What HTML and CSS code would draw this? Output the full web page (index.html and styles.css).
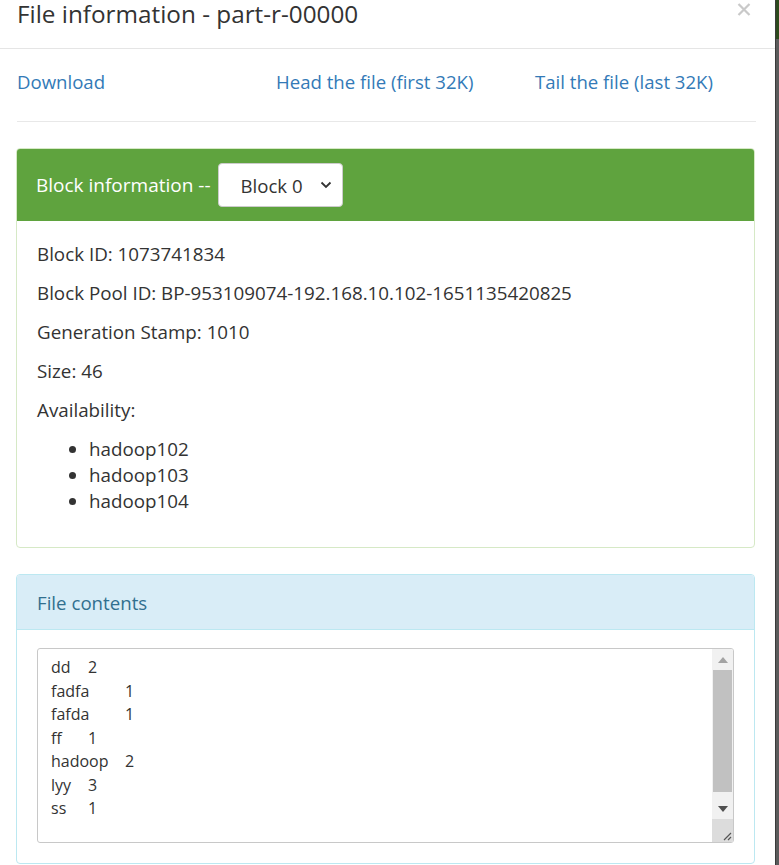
FILE: index.html
```html
<!DOCTYPE html>
<html>
<head>
<meta charset="utf-8">
<link rel="stylesheet" href="styles.css">
</head>
<body>
<div class="screen">
  <div class="modal">
    <div class="modal-header">
      <h4 class="modal-title">File information - part-r-00000</h4>
      <svg class="close" width="14" height="13" viewBox="0 0 14 13"><path d="M1.5 1 L12.5 12 M12.5 1 L1.5 12" stroke="#c9c9c9" stroke-width="2.2"/></svg>
    </div>
    <div class="modal-body">
      <div class="links">
        <a href="#">Download</a>
        <a href="#">Head the file (first 32K)</a>
        <a href="#">Tail the file (last 32K)</a>
      </div>
      <hr class="sep">
      <div class="panel panel-success">
        <div class="panel-heading">
          <span>Block information --</span>
          <div class="select"><span>Block 0</span>
            <svg class="chev" width="12" height="8" viewBox="0 0 12 8"><path d="M1.5 1.5 L6 6 L10.5 1.5" fill="none" stroke="#333" stroke-width="1.8"/></svg>
          </div>
        </div>
        <div class="panel-body">
          <p>Block ID: 1073741834</p>
          <p>Block Pool ID: BP-953109074-192.168.10.102-1651135420825</p>
          <p>Generation Stamp: 1010</p>
          <p>Size: 46</p>
          <p>Availability:</p>
          <ul>
            <li>hadoop102</li>
            <li>hadoop103</li>
            <li>hadoop104</li>
          </ul>
        </div>
      </div>
      <div class="panel panel-info">
        <div class="panel-heading">File contents</div>
        <div class="panel-body">
          <div class="textarea">
            <pre class="content">dd	2
fadfa	1
fafda	1
ff	1
hadoop	2
lyy	3
ss	1</pre>
            <div class="scrollbar">
              <div class="arrow up"><svg width="10" height="6" viewBox="0 0 10 6"><path d="M0 6 L5 0 L10 6 Z" fill="#a3a3a3"/></svg></div>
              <div class="track"><div class="thumb"></div></div>
              <div class="arrow down"><svg width="10" height="6" viewBox="0 0 10 6"><path d="M0 0 L10 0 L5 6 Z" fill="#505050"/></svg></div>
              <div class="corner"><svg width="10" height="10" viewBox="0 0 10 10"><path d="M9 2 L2 9 M9 6 L6 9" stroke="#555" stroke-width="1.2"/></svg></div>
            </div>
          </div>
        </div>
      </div>
    </div>
  </div>
  <div class="backdrop">
    <div class="bd-top"></div>
    <div class="bd-rest"></div>
  </div>
</div>
</body>
</html>
```

FILE: styles.css
```css
html, body {
  margin: 0;
  padding: 0;
  background: #fff;
}
body {
  font-family: "Open Sans", "Noto Sans", sans-serif;
  color: #333;
  overflow: hidden;
}
.screen {
  display: flex;
  width: 779px;
  height: 865px;
  overflow: hidden;
}
.modal {
  width: 775px;
  flex: none;
  background: #fff;
}
.backdrop {
  flex: 1;
  display: flex;
  flex-direction: column;
  border-left: 1px solid #3a3a3a;
}
.bd-top {
  height: 39px;
  background: #2c4a1c;
}
.bd-rest {
  flex: 1;
  background: #5b5b5b;
}
.modal-header {
  display: flex;
  justify-content: space-between;
  align-items: flex-start;
  height: 49px;
  box-sizing: border-box;
  padding: 0 24px 0 17px;
  border-bottom: 1px solid #e5e5e5;
}
.modal-title {
  margin: 0;
  font-size: 24.3px;
  font-weight: normal;
  line-height: 28px;
  color: #333;
}
.close {
  display: block;
  margin-top: 3px;
}
.modal-body {
  padding: 20px 20px 0 16px;
}
.links {
  display: grid;
  grid-template-columns: 259px 259px 1fr;
  padding-left: 1px;
}
.links a {
  color: #337ab7;
  text-decoration: none;
  font-size: 18.6px;
  line-height: 26px;
}
.sep {
  border: 0;
  border-top: 1px solid #e8e8e8;
  margin: 26px 0 26px 1px;
  width: 739px;
}
.panel {
  width: 739px;
  box-sizing: border-box;
  border: 1px solid;
  border-radius: 4px;
  background: #fff;
  overflow: hidden;
}
.panel-success {
  border-color: #d6e9c6;
  margin-bottom: 26px;
}
.panel-info {
  border-color: #bce8f1;
}
.panel-success .panel-heading {
  background: #5fa33e;
  color: #fff;
  display: flex;
  align-items: center;
  gap: 7px;
  height: 73px;
  box-sizing: border-box;
  padding: 1px 20px 0;
  font-size: 19px;
  margin: -1px -1px 0;
}
.select {
  width: 125px;
  height: 44px;
  box-sizing: border-box;
  background: #fff;
  border: 1px solid #ccc;
  border-radius: 4px;
  color: #333;
  display: flex;
  align-items: center;
  justify-content: space-between;
  padding: 0 10px 0 22px;
  font-size: 18.6px;
}
.chev { display: block; }
.panel-success .panel-body {
  padding: 19px 20px 33px;
  font-size: 18.8px;
}
.panel-body p {
  margin: 0 0 10px;
  line-height: 29px;
}
.panel-body ul {
  margin: 11px 0 0;
  padding-left: 52px;
}
.panel-body li {
  line-height: 26px;
}
.panel-info .panel-heading {
  background: #d9edf7;
  color: #31708f;
  border-bottom: 1px solid #bce8f1;
  height: 55px;
  box-sizing: border-box;
  padding: 0 20px;
  display: flex;
  align-items: center;
  font-size: 18.7px;
}
.panel-info .panel-body {
  padding: 18px 20px 20px;
}
.textarea {
  display: flex;
  height: 195px;
  box-sizing: border-box;
  border: 1px solid #c8c8c8;
  border-radius: 3px;
  overflow: hidden;
}
.content {
  flex: 1;
  margin: 0;
  padding: 7px 13px;
  font-family: "Open Sans", "Noto Sans", sans-serif;
  font-size: 16px;
  line-height: 23.5px;
  color: #333;
  tab-size: 37px;
}
.scrollbar {
  width: 21px;
  background: #f1f1f1;
  display: flex;
  flex-direction: column;
}
.arrow {
  height: 21px;
  display: flex;
  align-items: center;
  justify-content: center;
}
.arrow svg { display: block; }
.track {
  flex: 1;
  padding: 0 1px;
}
.thumb {
  height: 122px;
  background: #c1c1c1;
}
.corner {
  height: 22px;
  background: #dcdcdc;
  display: flex;
  align-items: flex-end;
  justify-content: flex-end;
  padding: 0 1px 1px 0;
}
.corner svg { display: block; }
```
